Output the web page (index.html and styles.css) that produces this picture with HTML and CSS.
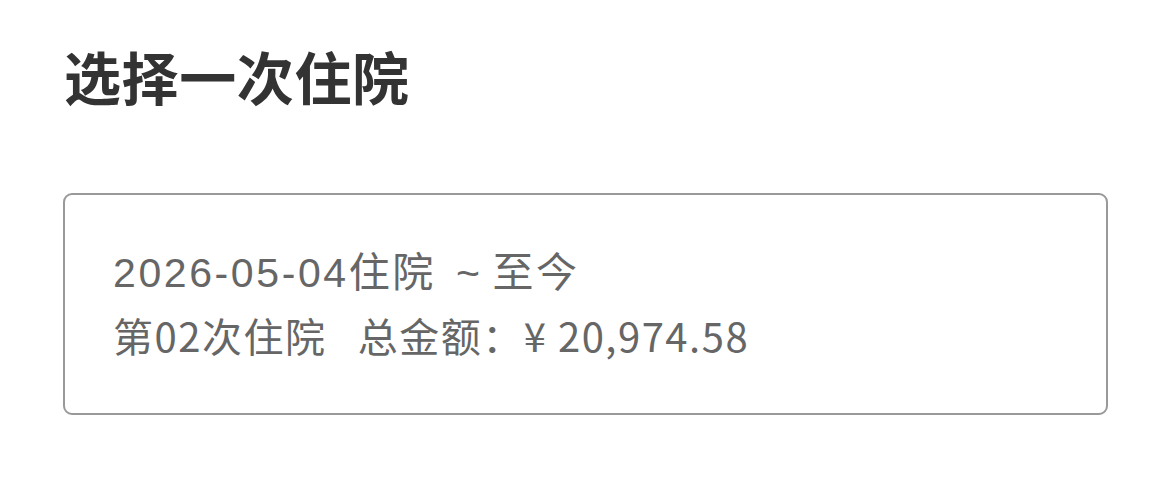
FILE: index.html
```html
<!DOCTYPE html>
<html lang="zh-CN">
<head>
    <meta charset="UTF-8">
    <meta name="viewport" content="width=device-width, initial-scale=1.0">
    <title>选择一次住院</title>
    <link rel="stylesheet" href="styles.css">
</head>
<body>
    <div class="page">
        <h1 class="title">选择一次住院</h1>

        <div class="stay-card">
            <div class="stay-line stay-date">2026-05-04住院 &nbsp;~ 至今</div>
            <div class="stay-line stay-total">第02次住院 &nbsp; 总金额：¥ 20,974.58</div>
        </div>
    </div>
</body>
</html>
```

FILE: styles.css
```css
body {
    margin: 0;
    background: #fff;
    font-family: "Noto Sans CJK SC", "Noto Sans", sans-serif;
}
.page {
    padding: 36px 63px 0 63px;
    width: 1045px;
}
.title {
    margin: 0 0 0 1px;
    font-size: 57px;
    line-height: 78px;
    font-weight: bold;
    color: #333;
    letter-spacing: 0.6px;
}
.stay-card {
    margin-top: 79px;
    height: 218px;
    border: 2px solid #999;
    border-radius: 9px;
    padding: 0 48px;
    display: flex;
    flex-direction: column;
    justify-content: center;
}
.stay-line {
    line-height: 62px;
    color: #666;
}
.stay-date {
    font-family: "Liberation Sans", "Noto Sans CJK SC", sans-serif;
    font-size: 41px;
    letter-spacing: 2.6px;
    word-spacing: -4px;
}
.stay-total {
    font-size: 40px;
    letter-spacing: 1.5px;
}
```
